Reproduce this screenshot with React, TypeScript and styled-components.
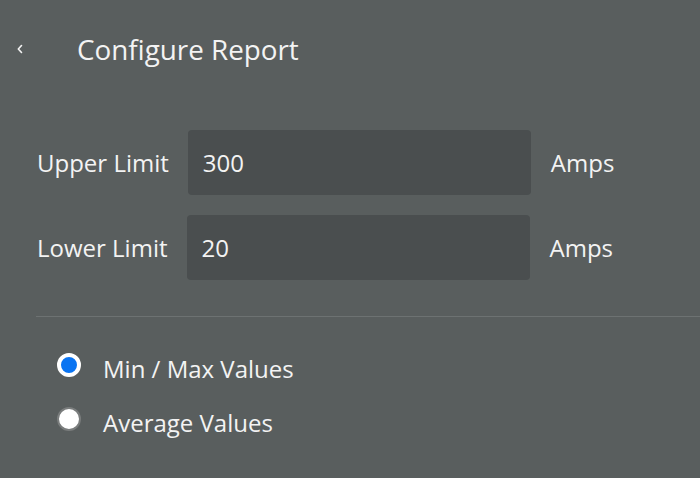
import React, { useState } from "react";
import styled, { createGlobalStyle } from "styled-components";

const Global = createGlobalStyle`
  html, body { margin: 0; padding: 0; background: #595e5e; }
  body { font-family: "Open Sans", "Noto Sans", sans-serif; color: #f3f3f3; }
  * { box-sizing: border-box; }
`;

const Page = styled.div`
  width: 700px;
  height: 478px;
  background: #595e5e;
  overflow: hidden;
`;

const Header = styled.header`
  display: flex;
  align-items: center;
  height: 100px;
  padding-left: 14px;
  padding-bottom: 3px;
`;

const BackButton = styled.button`
  display: flex;
  align-items: center;
  justify-content: center;
  width: 12px;
  height: 20px;
  margin-right: 51px;
  padding: 0;
  border: none;
  background: none;
  color: #f3f3f3;
  cursor: pointer;
`;

const Title = styled.h1`
  margin: 0;
  font-size: 27.8px;
  font-weight: 400;
`;

const Form = styled.div`
  display: flex;
  flex-direction: column;
  gap: 20px;
  padding: 30px 0 0 37px;
`;

const Row = styled.div`
  display: flex;
  align-items: center;
  height: 65px;
`;

const Label = styled.label`
  font-size: 24px;
  margin-right: 19px;
`;

const Input = styled.input`
  width: 343px;
  height: 65px;
  border: none;
  border-radius: 4px;
  background: #4a4e4f;
  color: #f3f3f3;
  font-family: inherit;
  font-size: 24px;
  padding: 0 15px;
  outline: none;
`;

const Unit = styled.span`
  font-size: 24px;
  margin-left: 20px;
`;

const Divider = styled.hr`
  margin: 36px 0 0 36px;
  border: none;
  border-top: 1px solid #6d7272;
`;

const RadioGroup = styled.div`
  display: flex;
  flex-direction: column;
  gap: 21px;
  padding: 35px 0 0 57px;
`;

const RadioRow = styled.label`
  display: flex;
  align-items: center;
  gap: 22px;
  font-size: 24px;
  height: 33px;
  cursor: pointer;
`;

const RadioDot = styled.span<{ $checked: boolean }>`
  width: 24px;
  height: 24px;
  border-radius: 50%;
  flex-shrink: 0;
  margin-top: -7px;
  background: ${(p) => (p.$checked ? "#0a74f2" : "#ffffff")};
  border: ${(p) => (p.$checked ? "4px solid #ffffff" : "2px solid #7a7d7d")};
`;

const RadioText = styled.span``;

export default function App() {
  const [mode, setMode] = useState("minmax");
  return (
    <Page>
      <Global />
      <Header>
        <BackButton aria-label="Back">
          <svg width="8" height="10" viewBox="0 0 8 10">
            <path d="M5.5 1.5 L2.3 5 L5.5 8.5" fill="none" stroke="#f3f3f3" strokeWidth="1.6" strokeLinecap="round" strokeLinejoin="round" />
          </svg>
        </BackButton>
        <Title>Configure Report</Title>
      </Header>
      <Form>
        <Row>
          <Label>Upper Limit</Label>
          <Input defaultValue="300" />
          <Unit>Amps</Unit>
        </Row>
        <Row>
          <Label>Lower Limit</Label>
          <Input defaultValue="20" />
          <Unit>Amps</Unit>
        </Row>
      </Form>
      <Divider />
      <RadioGroup>
        <RadioRow onClick={() => setMode("minmax")}>
          <RadioDot $checked={mode === "minmax"} />
          <RadioText>Min / Max Values</RadioText>
        </RadioRow>
        <RadioRow onClick={() => setMode("avg")}>
          <RadioDot $checked={mode === "avg"} />
          <RadioText>Average Values</RadioText>
        </RadioRow>
      </RadioGroup>
    </Page>
  );
}
